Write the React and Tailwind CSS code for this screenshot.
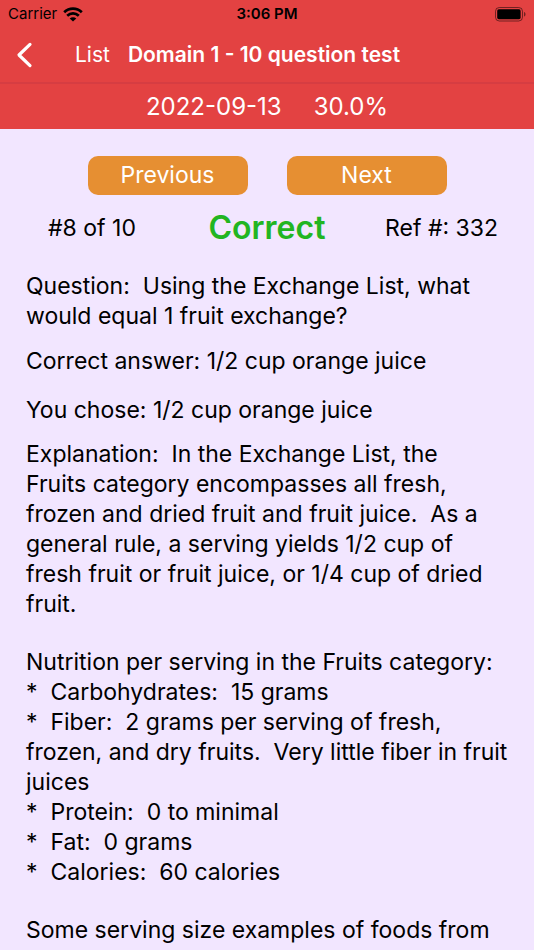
const explanation = [
    'Explanation:  In the Exchange List, the\nFruits category encompasses all fresh, frozen and dried fruit and fruit juice.  As a general rule, a serving yields 1/2 cup of fresh fruit or fruit juice, or 1/4 cup of dried fruit.',
    'Nutrition per serving in the Fruits category:\n*  Carbohydrates:  15 grams\n*  Fiber:  2 grams per serving of fresh, frozen, and dry fruits.  Very little fiber in fruit juices\n*  Protein:  0 to minimal\n*  Fat:  0 grams\n*  Calories:  60 calories',
    'Some serving size examples of foods from',
];

const WifiIcon = () => (
    <svg width="20" height="15" viewBox="0 0 20 15" fill="none" stroke="black" strokeWidth="2.7" aria-hidden="true">
        <path d="M1.2 5.3C6.2 .5 13.8 .5 18.8 5.3" />
        <path d="M4.2 8.7C7.6 5.5 12.4 5.5 15.8 8.7" />
        <path d="M10 14.6L6.7 11.4C8.6 9.7 11.4 9.7 13.3 11.4Z" fill="black" stroke="none" />
    </svg>
);

const BatteryIcon = () => (
    <svg width="31" height="15" viewBox="0 0 31 15" fill="none" aria-hidden="true">
        <rect x=".5" y=".5" width="27" height="13.5" rx="3.8" stroke="black" strokeOpacity=".5" />
        <rect x="2.2" y="2.3" width="23.4" height="9.9" rx="1.6" fill="black" />
        <path d="M29 5C31 5.6 31 9 29 9.6Z" fill="black" fillOpacity=".5" />
    </svg>
);

const StatusBar = () => (
    <div className="grid grid-cols-3 items-center h-7 px-2 text-[15px] text-black">
        <div className="flex items-center gap-1.5">
            <span>Carrier</span>
            <WifiIcon />
        </div>
        <span className="text-center font-semibold">3:06 PM</span>
        <div className="flex justify-end">
            <BatteryIcon />
        </div>
    </div>
);

const NavButton = ({ children }) => (
    <button type="button" className="w-40 h-[39px] rounded-[10px] bg-[#e68f32] text-white">
        {children}
    </button>
);

const App = () => {
    return (
        <div className="min-h-screen bg-[#f2e6ff] text-black font-['Inter','Liberation_Sans',sans-serif]">
            {/* Header */}
            <header className="bg-[#e34242] text-white">
                <StatusBar />
                <nav className="flex items-center h-[54px] pl-4">
                    <button type="button" aria-label="Back" className="w-[59px]">
                        <svg width="18" height="26" viewBox="0 0 18 26" fill="none" stroke="white" strokeWidth="3.2" strokeLinecap="round" strokeLinejoin="round">
                            <path d="M14 2.4L3 13L14 23.6" />
                        </svg>
                    </button>
                    <a href="#list" className="text-[21px]">List</a>
                    <h1 className="ml-[18px] text-[21px] font-semibold">Domain 1 - 10 question test</h1>
                </nav>
                <div className="flex justify-center gap-8 h-[47px] border-t-2 border-[#d63d42] text-2xl leading-[46px]">
                    <span>2022-09-13</span>
                    <span>30.0%</span>
                </div>
            </header>

            <main className="pt-[27px] text-[23px]">
                <div className="flex justify-center gap-[39px]">
                    <NavButton>Previous</NavButton>
                    <NavButton>Next</NavButton>
                </div>

                {/* Result */}
                <div className="grid grid-cols-[1fr_auto_1fr] items-center h-[66px] px-9">
                    <span className="pl-3">#8 of 10</span>
                    <span className="text-[32px] font-semibold text-[#22b522]">Correct</span>
                    <span className="text-right">Ref #: 332</span>
                </div>

                <div className="pl-[26px] pr-6 pt-[10px] leading-[30px] whitespace-pre-wrap">
                    <p>{'Question:  Using the Exchange List, what would equal 1 fruit exchange?'}</p>
                    <p className="mt-[15px]">Correct answer: 1/2 cup orange juice</p>
                    <p className="mt-[19px]">You chose: 1/2 cup orange juice</p>
                    <div className="mt-[14px] flex flex-col gap-7">
                        {explanation.map((text) => (
                            <p key={text}>{text}</p>
                        ))}
                    </div>
                </div>
            </main>
        </div>
    )
}

export default App;
